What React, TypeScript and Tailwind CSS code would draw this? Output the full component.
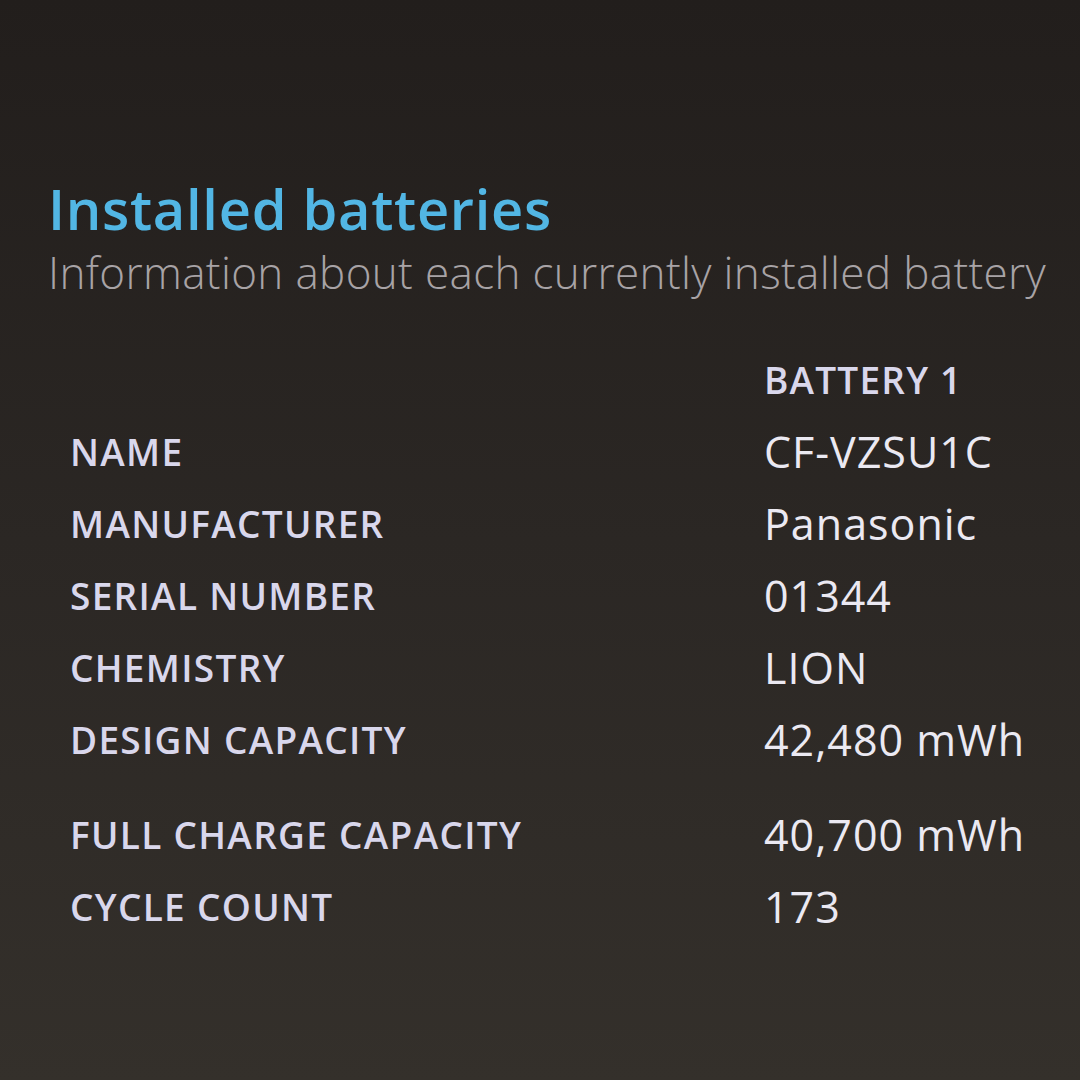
import React from 'react'

// ── 배터리 정보 행 ──
const rows: { label: string; value: string; gapBefore?: boolean }[] = [
  { label: 'NAME', value: 'CF-VZSU1C' },
  { label: 'MANUFACTURER', value: 'Panasonic' },
  { label: 'SERIAL NUMBER', value: '01344' },
  { label: 'CHEMISTRY', value: 'LION' },
  { label: 'DESIGN CAPACITY', value: '42,480 mWh' },
  { label: 'FULL CHARGE CAPACITY', value: '40,700 mWh', gapBefore: true },
  { label: 'CYCLE COUNT', value: '173' },
]

export default function App() {
  return (
    <div
      className="h-[1080px] w-[1080px] overflow-hidden bg-gradient-to-b from-[#221e1c] via-[#2b2724] to-[#34302b] pt-[176px]"
      style={{ fontFamily: '"Open Sans", "Noto Sans", sans-serif' }}
    >
      {/* 제목 */}
      <div className="pl-[48px]">
        <h1 className="text-[56px] font-semibold leading-[64px] tracking-[0.7px] text-[#52b6e4]">
          Installed batteries
        </h1>
        <p className="mt-[4px] text-[44px] font-light leading-[56px] tracking-[0.35px] text-[#a8a3a6]">
          Information about each currently installed battery
        </p>
      </div>

      {/* 표 */}
      <div className="mt-[44px] pl-[70px]">
        <div className="grid grid-cols-[694px_1fr] items-center">
          <div className="h-[72px]" />
          <div className="text-[37px] font-semibold leading-[72px] tracking-[1.2px] text-[#d9d7ec]">BATTERY 1</div>
          {rows.map((r) => (
            <React.Fragment key={r.label}>
              <div
                className={`text-[37px] font-semibold leading-[72px] tracking-[1.3px] text-[#d9d7ec] ${r.gapBefore ? 'pt-[23px]' : ''}`}
              >
                {r.label}
              </div>
              <div
                className={`text-[43px] font-normal leading-[72px] tracking-[1px] text-[#ebe9f2] ${r.gapBefore ? 'pt-[23px]' : ''}`}
              >
                {r.value}
              </div>
            </React.Fragment>
          ))}
        </div>
      </div>
    </div>
  )
}
